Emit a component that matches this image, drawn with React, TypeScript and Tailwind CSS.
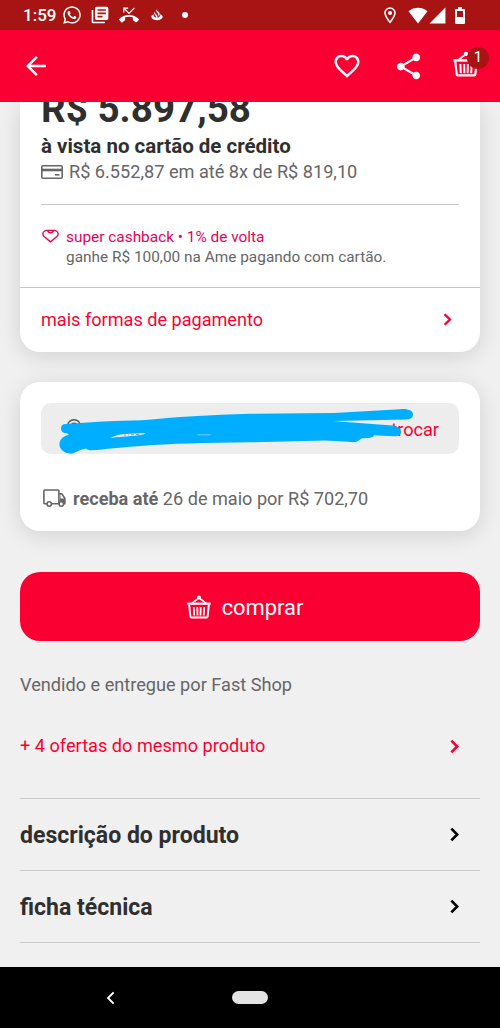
import type { ReactNode } from "react";
import {
  MdArrowBack,
  MdFavoriteBorder,
  MdLibraryBooks,
  MdPhoneMissed,
  MdShare,
  MdSignalCellular4Bar,
} from "react-icons/md";
import { FaWhatsapp } from "react-icons/fa";

function Chevron({ className }: { className: string }) {
  return (
    <svg viewBox="0 0 10 16" fill="none" stroke="currentColor" strokeWidth="2.9" className={className}>
      <path d="M1.5 1.5 8 8l-6.5 6.5" />
    </svg>
  );
}

function Basket({ className }: { className: string }) {
  return (
    <svg viewBox="0 0 24 24" fill="none" stroke="currentColor" className={className}>
      <path d="M4.500 8.600 12 2.800l7.500 5.800" strokeWidth="1.700" />
      <circle cx="12" cy="2.600" r="2" fill="currentColor" stroke="none" />
      <path d="M.3 8.700h23.400" strokeWidth="2.200" />
      <path d="M2.100 9.500l1.300 12q.1 1 1.100 1h15q1 0 1.100-1l1.300-12" strokeWidth="2" />
      <path d="M6.800 12l.4 8.500M10.300 12l.2 8.500M13.700 12l-.2 8.500M17.200 12l-.4 8.500" strokeWidth="1.800" />
    </svg>
  );
}

function StatusBar() {
  return (
    <div className="flex h-[30px] items-center bg-[#a81414] pr-[35px] pl-[23px] text-white">
      <span className="w-[39px] text-[17px] leading-[30px] font-medium">1:59</span>
      <FaWhatsapp className="size-[20px]" />
      <MdLibraryBooks className="ml-[8px] size-[20px]" />
      <MdPhoneMissed className="ml-[9px] size-[20px]" />
      <svg viewBox="0 0 12 12" fill="currentColor" className="ml-[12px] size-[12px]">
        <path d="M5.600 0c-.9 1.800 0 2.800.9 4 .8 1.100 1 2.100.6 3.400C9.200 6 9 4.300 7.700 3 6.500 1.900 5.500 1 5.600 0Z" />
        <path d="M3.500 2.500C2.500 4.300 3.700 5.400 4.400 6.500c.5.800.6 1.400.4 2.200h1.800c.2-1.200-.5-2.200-1.300-3.200-.9-1-1.700-1.700-1.800-3Z" />
        <path d="M2.600 5.200C.9 6 .1 7 .3 8.100.7 10 3 11.300 6 11.300s5.300-1.300 5.700-3.200c.2-1.200-.9-2.300-2.600-2.800.2 1.700-.8 3.500-3.100 3.500S2.400 7 2.600 5.200Z" />
      </svg>
      <span className="ml-[19px] size-[6px] rounded-full bg-white" />

      <svg viewBox="0 0 12 17" fill="none" stroke="currentColor" strokeWidth="1.600" className="ml-auto h-[17px] w-[12px]">
        <path d="M6 15.300C3.400 12 1 9 1 6a5 5 0 0 1 10 0c0 3-2.400 6-5 9.300Z" />
        <circle cx="6" cy="6" r="2.100" fill="currentColor" stroke="none" />
      </svg>
      <svg viewBox="0 0 20 17" fill="currentColor" className="ml-[12px] h-[17px] w-[20px]">
        <path d="M10 16.500.5 4.300C3.500 1.800 6.700.7 10 .7s6.500 1.100 9.500 3.600Z" />
      </svg>
      <MdSignalCellular4Bar className="size-[19px]" />
      <svg viewBox="0 0 10 17" className="ml-[8px] h-[17px] w-[10px]">
        <path d="M3 0h4v2h2q1 0 1 1v13q0 1-1 1H1q-1 0-1-1V3q0-1 1-1h2Z" fill="currentColor" />
        <path d="M2 4h6v6H2Z" fill="#a81414" />
      </svg>
    </div>
  );
}

function AppBar() {
  return (
    <div className="flex h-[72px] items-center bg-[#fa0032] pl-[21px] text-white">
      <MdArrowBack className="size-[30px]" />
      <MdFavoriteBorder className="ml-[281px] size-[30px]" />
      <MdShare className="ml-[31px] size-[31px]" />
      <div className="relative mb-[5px] ml-[29px]">
        <Basket className="size-[26px]" />
        <span className="absolute -top-[4px] left-[14px] flex size-[22px] items-center justify-center rounded-full bg-[#a81414] text-[15px]">
          1
        </span>
      </div>
    </div>
  );
}

function PaymentCard() {
  return (
    <section className="mx-5 h-[250px] rounded-b-[20px] bg-white shadow-[0_4px_22px_rgba(0,0,0,0.13)]">
      <div className="px-[21px]">
        <p className="-mt-[13px] inline-block text-[38.600px] leading-[40px] font-bold text-[#2f2f2f]">R$ 5.897,58</p>
        <p className="mt-[4px] text-[20.500px] leading-[26px] font-bold text-[#2f2f2f]">à vista no cartão de crédito</p>
        <div className="flex h-[26px] items-center text-[#666]">
          <svg viewBox="0 0 22 14" fill="none" stroke="currentColor" strokeWidth="1.600" className="mr-[6px] h-[14px] w-[22px]">
            <rect x=".8" y=".8" width="20.400" height="12.400" rx="1.300" />
            <path d="M.7 5h20.600" strokeWidth="2.600" />
            <path d="M14 9.800h4.500" />
          </svg>
          <span className="text-[18.150px] leading-[26px]">R$ 6.552,87 em até 8x de R$ 819,10</span>
        </div>
        <div className="mt-[19px] h-px bg-[#c6c6c6]" />
        <div className="mt-[22px] flex h-[60px]">
          <svg viewBox="0 0 18 14" fill="none" stroke="#e6004c" strokeWidth="1.500" className="mt-[2px] mr-[7px] ml-px h-[14px] w-[17px]">
            <path d="M4.500 1h9c1.800.4 3.600 2.300 3.600 4 0 1.200-.5 1.900-1.300 2.600L9 13.100 2.200 7.600C1.400 6.900.9 6.200.9 5c0-1.700 1.800-3.600 3.600-4Z" />
            <path d="M5.800 1.200Q9 6.500 12.200 1.200" />
          </svg>
          <div className="text-[15.400px] leading-[20px] whitespace-nowrap">
            <p className="text-[#e6005a]">super cashback • 1% de volta</p>
            <p className="text-[#666]">ganhe R$ 100,00 na Ame pagando com cartão.</p>
          </div>
        </div>
      </div>
      <div className="h-px bg-[#c6c6c6]" />
      <div className="flex h-[63px] items-center justify-between pr-[28px] pl-[21px] text-[#fa0032]">
        <span className="pt-px text-[18.100px]">mais formas de pagamento</span>
        <Chevron className="mb-px h-[13px] w-[9px]" />
      </div>
    </section>
  );
}

// marker strokes painted over the delivery address
function Scribble() {
  return (
    <svg viewBox="41 403 419 51" className="absolute top-0 left-0 h-[51px] w-[419px]">
      <path
        d="M65.500 424C90 422 115 421 142 420.300C175 417 210 414.700 250 413.700L334 413 400 409.200C409 408.500 413 411 413 414.500S410 419.300 406 419.500L333 421 392 425.500C399 426.500 401 429 401 432S398 436.500 393 436.300L374 435.300C373 437.500 370 438.300 362 438.300L358 441C356 442.500 353 442.300 348 441.800L325 440.500 250 442.300C205 443 170 443.500 141 446C120 447.300 106 449.300 91 450.300 89 450.300 87 449.500 86 448.500 80 449.500 77 452 73 453.200 65 454.500 59.500 449.500 59.500 444.500S63 436 69 434.700L67 433.200C63 433.300 61 431.500 61 428.500S62.500 424.200 65.500 424Z"
        fill="#00aeff"
      />
      <path d="M110 438c5-2.300 9-3.800 14-4l22-1-3 1.400-8 1.300c-9 .6-17 1-25 2.300Z" fill="#ededed" />
      <path d="M197 434.500h14l-1 .8h-12Z" fill="#a5d3ea" />
      <path d="M124 435h2m2 0h1m2-.3h3m2-.2h3" stroke="#777" strokeWidth=".7" />
    </svg>
  );
}

function DeliveryCard() {
  return (
    <section className="mx-5 mt-[30px] h-[149px] rounded-[20px] bg-white px-[21px] pt-[21px] shadow-[0_4px_22px_rgba(0,0,0,0.13)]">
      <div className="relative flex h-[51px] items-center justify-between rounded-[10px] bg-[#ededed] pr-[20px] pl-[25px]">
        <svg viewBox="0 0 16 20" fill="none" stroke="#555" strokeWidth="1.400" className="h-[20px] w-[16px]">
          <path d="M8 19C4 14 1.500 11 1.500 7.200a6.500 6.500 0 0 1 13 0C14.500 11 12 14 8 19Z" />
          <circle cx="8" cy="7" r="2.700" />
        </svg>
        <span className="pt-[2px] text-[18.150px] text-[#fa0032]">trocar</span>
        <Scribble />
      </div>
      <div className="mt-[31px] flex h-[26px] items-center text-[18.100px] text-[#666]">
        <svg viewBox="0 0 23 18" fill="none" stroke="currentColor" strokeWidth="1.600" className="mr-[7px] ml-[2px] h-[18px] w-[23px]">
          <path d="M4.200 14.700H1.700q-.8 0-.8-.8V2q0-1 1-1h13.200q.8 0 .8.800v12.900H8.300" />
          <path d="M15.900 4.900h2.900l3 4.300v5.500h-1" />
          <path d="M17.600 6.300v3.400H22v4.600h-1.500q-1.500-3-4-1" fill="currentColor" strokeWidth=".4" />
          <circle cx="6.200" cy="15" r="2.200" />
          <circle cx="18.300" cy="15" r="2.200" fill="white" />
        </svg>
        <span className="pt-px">
          <b className="font-bold">receba até</b> 26 de maio por R$ 702,70
        </span>
      </div>
    </section>
  );
}

function SectionRow({ children }: { children: ReactNode }) {
  return (
    <div className="flex h-[72px] items-center justify-between border-b border-[#cacaca] pr-[21px] text-[23.050px] font-bold text-[#2f2f2f]">
      <span className="pt-[4px]">{children}</span>
      <Chevron className="mb-px h-[15px] w-[9px] text-black" />
    </div>
  );
}

export default function App() {
  return (
    <div className="flex h-[1028px] w-[500px] flex-col overflow-hidden bg-[#f0f0f0] font-['Roboto',sans-serif]">
      <StatusBar />
      <AppBar />
      <main className="flex-1 overflow-hidden">
        <PaymentCard />
        <DeliveryCard />
        <div className="px-5">
          <button className="mt-[41px] flex h-[69px] w-full items-center justify-center rounded-[20px] bg-[#fa0032] pt-px pr-[10px] text-[21.900px] text-white">
            <Basket className="mr-[11px] size-[24px]" />
            <span className="pt-[2px]">comprar</span>
          </button>
          <p className="mt-[31px] text-[18.150px] leading-[26px] text-[#666]">Vendido e entregue por Fast Shop</p>
          <div className="mt-[34px] flex h-[26px] items-center justify-between pr-[21px] text-[18.150px] text-[#fa0032]">
            <span className="pt-[2px]">+ 4 ofertas do mesmo produto</span>
            <Chevron className="mt-[3px] h-[15px] w-[9px]" />
          </div>
          <div className="mt-[40px] border-t border-[#cacaca]">
            <SectionRow>descrição do produto</SectionRow>
            <SectionRow>ficha técnica</SectionRow>
          </div>
        </div>
      </main>
      <nav className="flex h-[61px] items-center bg-black pl-[106px]">
        <svg viewBox="0 0 9 14" fill="none" stroke="white" strokeWidth="1.900" className="h-[14px] w-[9px]">
          <path d="M7.600 1.300 2 7l5.600 5.700" />
        </svg>
        <span className="ml-[117px] h-[13px] w-[36px] rounded-full bg-[#e4e4e4]" />
      </nav>
    </div>
  );
}
